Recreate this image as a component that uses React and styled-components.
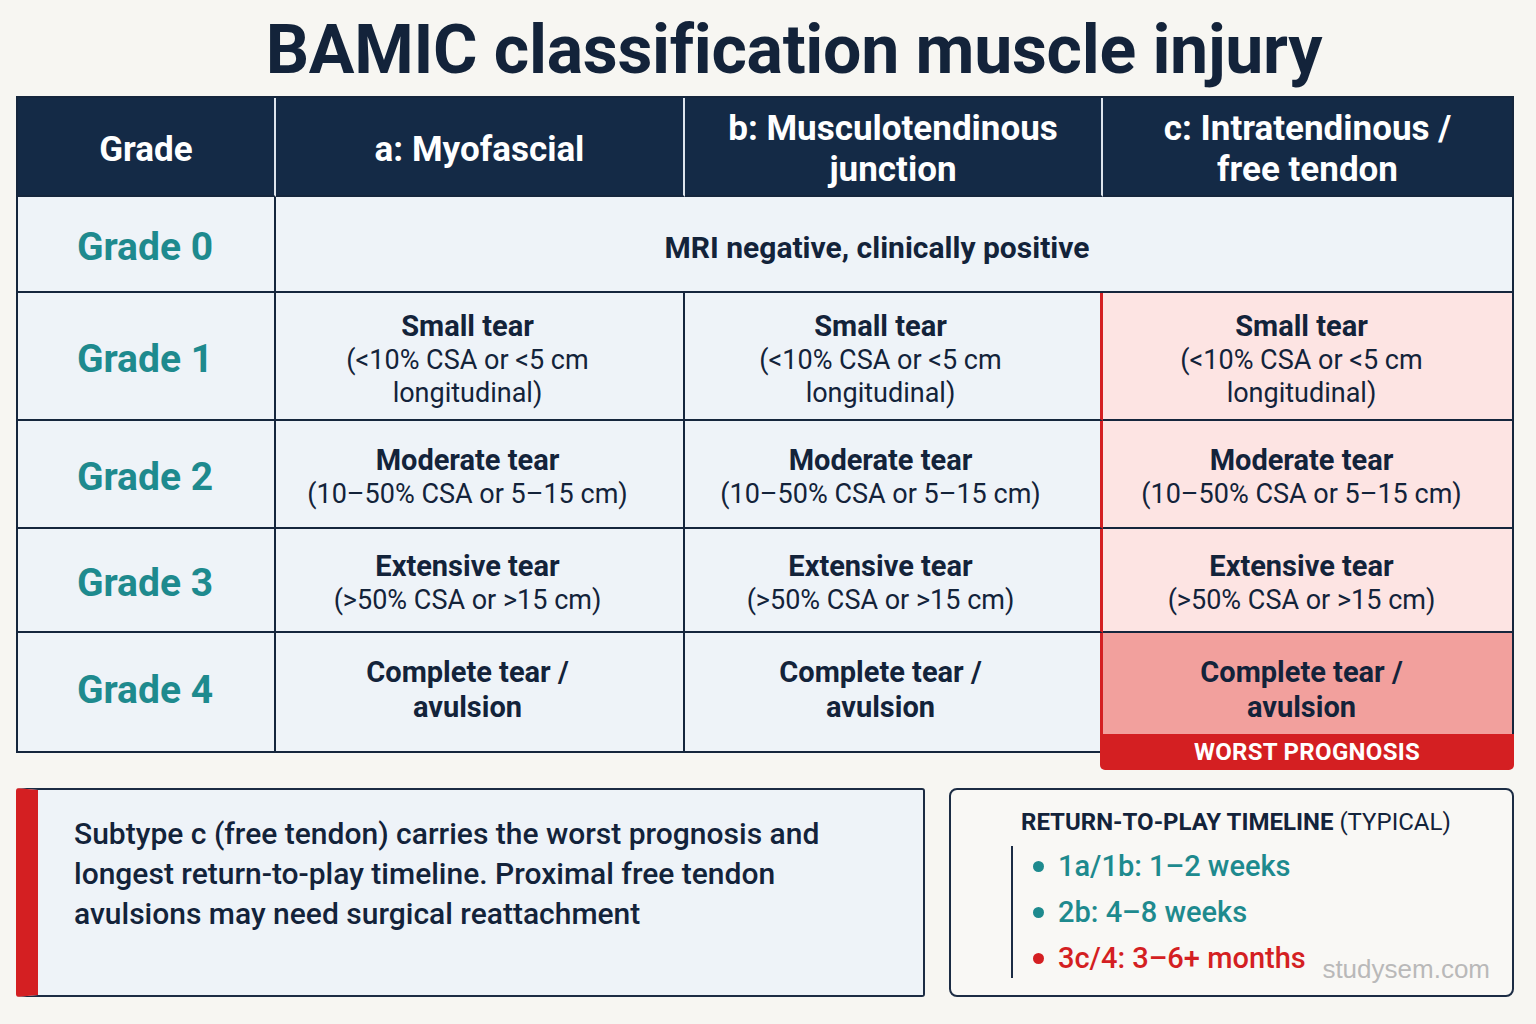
import styled, { createGlobalStyle } from 'styled-components';

const Global = createGlobalStyle`
  body {
    margin: 0;
    background: #f7f6f2;
    font-family: Roboto, "Liberation Sans", sans-serif;
    color: #13233a;
  }
`;

const NAVY = '#15263d';
const RED = '#d41f22';
const TEAL = '#1e8a8e';

const grades = [
  {
    label: 'Grade 1',
    title: 'Small tear',
    lines: ['(<10% CSA or <5 cm', 'longitudinal)'],
  },
  {
    label: 'Grade 2',
    title: 'Moderate tear',
    lines: ['(10–50% CSA or 5–15 cm)'],
  },
  {
    label: 'Grade 3',
    title: 'Extensive tear',
    lines: ['(>50% CSA or >15 cm)'],
  },
  {
    label: 'Grade 4',
    title: 'Complete tear /',
    lines: [],
    boldLines: ['avulsion'],
  },
];

const timeline = [
  { text: '1a/1b: 1–2 weeks', color: TEAL },
  { text: '2b: 4–8 weeks', color: TEAL },
  { text: '3c/4: 3–6+ months', color: RED },
];

const App = () => {
  return (
    <Page>
      <Global />
      <Title>BAMIC classification muscle injury</Title>

      <Table>
        <Head>Grade</Head>
        <Head>a: Myofascial</Head>
        <Head>b: Musculotendinous<br />junction</Head>
        <Head $last>c: Intratendinous /<br />free tendon</Head>

        <Cell $pad><GradeLabel>Grade 0</GradeLabel></Cell>
        <Cell $span={3} $last $pad><Wide>MRI negative, clinically positive</Wide></Cell>

        {grades.map((g, i) => {
          const lastRow = i === grades.length - 1;
          const content = (
            <>
              <Strong>{g.title}</Strong>
              {g.lines.map((l) => <Plain key={l}>{l}</Plain>)}
              {(g.boldLines || []).map((l) => <Strong key={l}>{l}</Strong>)}
            </>
          );
          return [
            <Cell key={g.label + 'g'} $lastRow={lastRow} $pad={!lastRow}><GradeLabel>{g.label}</GradeLabel></Cell>,
            <Cell key={g.label + 'a'} $lastRow={lastRow} $pad={!lastRow}><Stack>{content}</Stack></Cell>,
            <Cell key={g.label + 'b'} $lastRow={lastRow} $pad={!lastRow} $redRight><Stack>{content}</Stack></Cell>,
            <Cell key={g.label + 'c'} $lastRow={lastRow} $pad={!lastRow} $last $tone={lastRow ? 'strong' : 'soft'}>
              <Stack $narrow>{content}</Stack>
              {lastRow && <Banner>WORST PROGNOSIS</Banner>}
            </Cell>,
          ];
        })}
      </Table>

      <Bottom>
        <Note>
          Subtype c (free tendon) carries the worst prognosis and
          longest return-to-play timeline. Proximal free tendon
          avulsions may need surgical reattachment
        </Note>
        <Timeline>
          <TimelineTitle>RETURN-TO-PLAY TIMELINE <span>(TYPICAL)</span></TimelineTitle>
          <List>
            {timeline.map((t) => (
              <Item key={t.text} $color={t.color}>{t.text}</Item>
            ))}
          </List>
          <Watermark>studysem.com</Watermark>
        </Timeline>
      </Bottom>
    </Page>
  );
};

export default App;

const Page = styled.div`
  width: 1498px;
  margin-left: 16px;
  padding-top: 12px;
`;

const Title = styled.h1`
  margin: 0 0 8px;
  padding-left: 58px;
  height: 76px;
  font-size: 68px;
  line-height: 76px;
  font-weight: 700;
  text-align: center;
  color: #13233a;
  letter-spacing: -0.3px;
`;

const Table = styled.div`
  display: grid;
  grid-template-columns: 258px 409px 418px 409px;
  grid-template-rows: 99px 96px 128px 108px 104px 118px;
  border: 2px solid ${NAVY};
  background: #eef3f8;
`;

const Head = styled.div`
  display: flex;
  align-items: center;
  justify-content: center;
  text-align: center;
  background: #142a46;
  color: #fff;
  font-size: 35px;
  font-weight: 700;
  line-height: 41px;
  border-right: ${(p) => (p.$last ? 'none' : '2px solid #dde4ec')};
  border-bottom: 2px solid ${NAVY};
  padding-top: 5px;
`;

const Cell = styled.div`
  position: relative;
  box-sizing: border-box;
  display: flex;
  align-items: center;
  justify-content: center;
  text-align: center;
  padding-top: ${(p) => (p.$pad ? '10px' : '0')};
  grid-column: span ${(p) => p.$span || 1};
  background: ${(p) =>
    p.$tone === 'strong' ? '#f2a09d' : p.$tone === 'soft' ? '#fde4e3' : '#eef3f8'};
  border-right: ${(p) =>
    p.$last ? 'none' : p.$redRight ? `3px solid ${RED}` : `2px solid ${NAVY}`};
  border-bottom: ${(p) => (p.$lastRow ? 'none' : `2px solid ${NAVY}`)};
`;

const GradeLabel = styled.span`
  font-size: 39px;
  font-weight: 700;
  color: ${TEAL};
  margin-left: -2px;
  margin-top: -4px;
`;

const Stack = styled.div`
  display: flex;
  flex-direction: column;
  align-items: center;
  margin-right: ${(p) => (p.$narrow ? '12px' : '24px')};
  margin-top: -4px;
`;

const Strong = styled.span`
  font-size: 29px;
  font-weight: 700;
  line-height: 35px;
  color: #13233a;
`;

const Plain = styled.span`
  font-size: 27px;
  font-weight: 400;
  line-height: 33px;
  color: #13233a;
`;

const Wide = styled.span`
  font-size: 30px;
  font-weight: 700;
  color: #13233a;
  margin-right: 34px;
  margin-top: -4px;
`;

const Banner = styled.div`
  position: absolute;
  left: -3px;
  right: -2px;
  bottom: -19px;
  height: 36px;
  display: flex;
  align-items: center;
  justify-content: center;
  background: ${RED};
  color: #fff;
  font-size: 24px;
  font-weight: 700;
  letter-spacing: 0.3px;
  border-radius: 0 0 5px 5px;
`;

const Bottom = styled.div`
  display: flex;
  gap: 24px;
  margin-top: 35px;
`;

const Note = styled.div`
  box-sizing: border-box;
  width: 909px;
  height: 209px;
  background: #eef3f8;
  border: 2px solid #1c2c44;
  border-left: 22px solid ${RED};
  border-radius: 3px;
  padding: 24px 60px 0 36px;
  font-size: 30px;
  font-weight: 500;
  line-height: 40px;
  color: #13233a;
`;

const Timeline = styled.div`
  position: relative;
  box-sizing: border-box;
  width: 565px;
  height: 209px;
  background: #f9f8f5;
  border: 2px solid #1c2c44;
  border-radius: 8px;
  padding: 18px 0 0 60px;
`;

const TimelineTitle = styled.div`
  padding-left: 10px;
  font-size: 24px;
  font-weight: 700;
  line-height: 28px;
  color: #13233a;

  span {
    font-weight: 400;
  }
`;

const List = styled.ul`
  list-style: none;
  margin: 10px 0 0;
  padding: 0 0 0 20px;
  border-left: 2px solid #1c2c44;
  height: 132px;
  display: flex;
  flex-direction: column;
  justify-content: space-between;
`;

const Item = styled.li`
  display: flex;
  align-items: center;
  gap: 14px;
  font-size: 29px;
  font-weight: 500;
  line-height: 40px;
  color: ${(p) => p.$color};

  &::before {
    content: '';
    width: 11px;
    height: 11px;
    border-radius: 50%;
    background: ${(p) => p.$color};
  }
`;

const Watermark = styled.div`
  position: absolute;
  right: 22px;
  bottom: 10px;
  font-family: "Liberation Sans", Arial, sans-serif;
  font-size: 26px;
  color: #b9b9b9;
`;
